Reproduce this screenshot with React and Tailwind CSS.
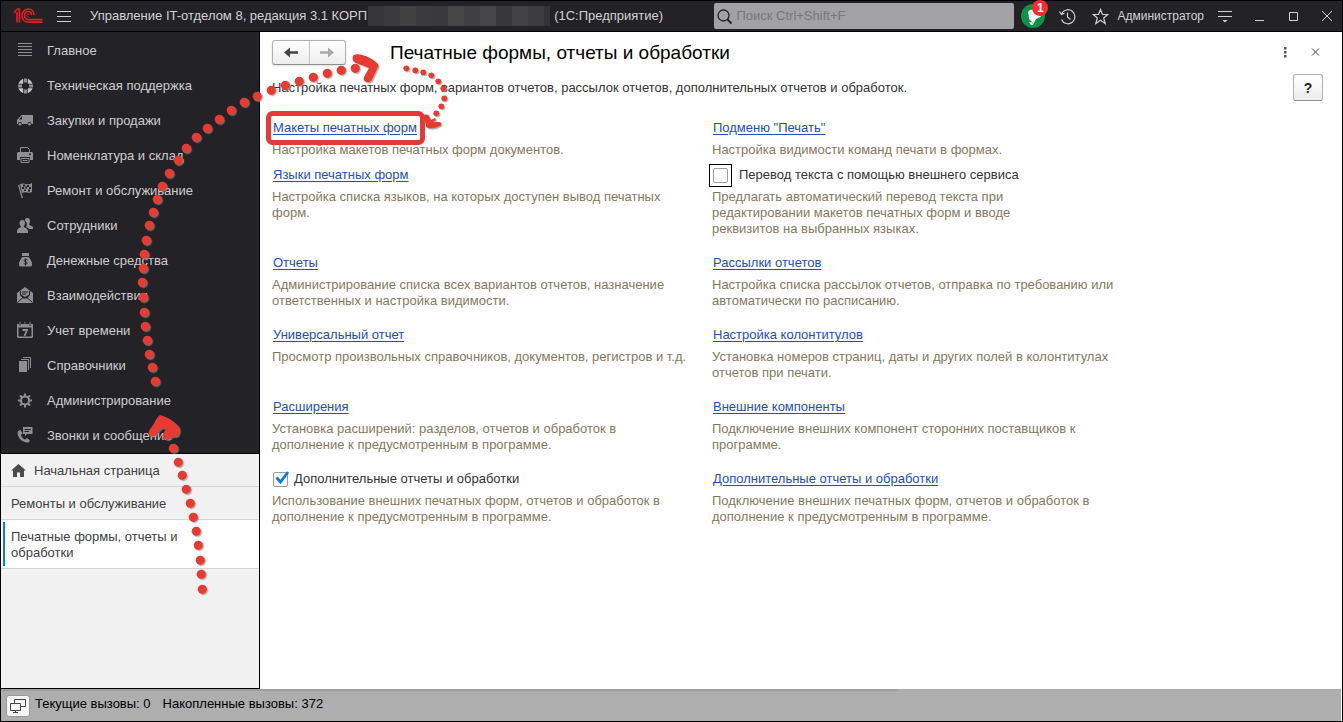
import React from "react";

const G = "#8f8f8f";
const D = "#232227";

const Icon = ({ children }) => (
  <svg width="18" height="18" viewBox="0 0 18 18" fill={G} className="shrink-0" aria-hidden="true">{children}</svg>
);

const SECTIONS = [
  ["Главное", <Icon><path d="M2 1h14v1H2zM2 4h14v1H2zM2 7h14v1H2zM2 10h14v1H2zM2 13h14v1H2z" /></Icon>],
  ["Техническая поддержка", <Icon>
    <circle cx="9.500" cy="9" r="5.200" fill="none" stroke="#c4c4c4" strokeWidth="4.400" />
    <path d="M9.500 1v6M9.500 11v6.500M1 9h6.500M11.500 9H18" stroke={D} strokeWidth="4.600" />
    <path d="M9.500 1.500v4M9.500 12.500v4M2 9h4M13 9h4" stroke={G} strokeWidth="3" /></Icon>],
  ["Закупки и продажи", <Icon>
    <path d="M1 12V8l4.500-5H17v9h-1.500a2 2 0 0 0-4 0H6a2 2 0 0 0-4 0z" /><path d="M3 7.500 5.500 4.500H6v3z" fill={D} />
    <circle cx="4" cy="12.300" r="1.300" /><circle cx="13.500" cy="12.300" r="1.300" /></Icon>],
  ["Номенклатура и склад", <Icon>
    <path d="M4.500 6V.5h7l2 2V6" fill="none" stroke={G} />
    <path fillRule="evenodd" d="M2 5h14l1 1v7h-3v-3H4v3H1V6zM13 6.500h2V8h-2z" />
    <path d="M5 11.500h8v4H5zM6.500 13.500h5" fill="none" stroke={G} /></Icon>],
  ["Ремонт и обслуживание", <Icon>
    <path d="M2 3 3.200 2.500 7 16H5.600z" /><path d="M4 2c4-2 7 2 12-1v9c-4 2-6-1-10 1z" />
    <path d="M7 2.500h2v2H7zM11 3h2v2h-2zM9 4.500h2v2H9zM13 5h2v2h-2zM6 5h2v2H6zM8 7.500h2V9H8zM12 7.500h2v2h-2z" fill={D} /></Icon>],
  ["Сотрудники", <Icon>
    <path d="M9 3.500C9 1.500 10 1 11.500 1S14 2 14 4s-.5 3-1 3.500c0 1 4 1 4 3.500v1h-4c-.5-1-2-1.500-3-2 1-1.500 1-3 .5-4.500C10 4.500 9 4.500 9 3.500z" />
    <path d="M3.500 6c0-2 1-3 2.700-3S9 4 9 6 8 9 7.700 9.500c0 1.500 4.300 1 4.300 5V16H1v-1.500c0-4 4-3.500 4-5C4.500 9 3.500 8 3.500 6z" /></Icon>],
  ["Денежные средства", <Icon>
    <path d="M6 1h7v3H6zM6.500 5h6c2 2 3.500 4.500 3.500 7.500 0 1.500-.5 2-2 2H5c-1.500 0-2-.5-2-2 0-3 1.500-5.500 3.500-7.500z" />
    <path d="M11.300 8C10 7 8 7.500 8 8.700c0 1.300 3.200.8 3.200 2.300 0 1.300-2.200 1.600-3.400.6M9.500 6.500v7" fill="none" stroke={D} /></Icon>],
  ["Взаимодействия", <Icon>
    <path d="M1 6 9 0l8 6v10H1z" /><path d="M4 4h10v4l-3 3.500H7L4 8z" fill={D} />
    <path d="M5 4h8v3.500L9 10 5 7.500z" /><path d="M6 5h6M6 7h4M1.500 15.500 7 10.500M16.500 15.500 11 10.500" stroke={D} /></Icon>],
  ["Учет времени", <Icon>
    <path fillRule="evenodd" d="M1 2h2v1.500h2V2h8v1.500h2V2h2v13l-1 1H2l-1-1zM2.500 5.500v9h13v-9z" /><path d="M3.500 0h1v3h-1zM13.500 0h1v3h-1zM8.500 0h1v1.500h-1z" />
    <path d="M6.500 8h4.500l-2.500 6" fill="none" stroke={G} strokeWidth="1.800" /></Icon>],
  ["Справочники", <Icon>
    <path d="M3 4h8v11H3z" /><path d="M5 2.500h7.500V13M7 .5h7.500V11" fill="none" stroke={G} /></Icon>],
  ["Администрирование", <Icon>
    <circle cx="9" cy="8.500" r="4" fill="none" stroke={G} strokeWidth="2" />
    <path d="M9 1.500v3M9 12.500v3M2 8.500h3M13 8.500h3M4 3.500l2 2M12 11.500l2 2M14 3.500l-2 2M6 11.500l-2 2" stroke={G} strokeWidth="2" /></Icon>],
  ["Звонки и сообщения", <Icon>
    <path d="M2 4 4.500 3 6.500 6 5 8c.5 2 2 3.500 4 4.500l2-1.500 3 2.500-1.500 2C7 16.500 0 10 2 4z" />
    <path fillRule="evenodd" d="M7 0h9.500v7H11L9 9V7H7zM8.500 2v1h6.500V2zM8.500 4v1H13V4z" /></Icon>],
];

const ITEMS = [
  { title: "Макеты печатных форм", text: "Настройка макетов печатных форм документов." },
  { title: "Подменю \"Печать\"", text: "Настройка видимости команд печати в формах." },
  { title: "Языки печатных форм", text: "Настройка списка языков, на которых доступен вывод печатных\nформ." },
  { title: "Перевод текста с помощью внешнего сервиса", check: "focus", text: "Предлагать автоматический перевод текста при\nредактировании макетов печатных форм и вводе\nреквизитов на выбранных языках." },
  { title: "Отчеты", text: "Администрирование списка всех вариантов отчетов, назначение\nответственных и настройка видимости." },
  { title: "Рассылки отчетов", text: "Настройка списка рассылок отчетов, отправка по требованию или\nавтоматически по расписанию." },
  { title: "Универсальный отчет", text: "Просмотр произвольных справочников, документов, регистров и т.д." },
  { title: "Настройка колонтитулов", text: "Установка номеров страниц, даты и других полей в колонтитулах\nотчетов при печати." },
  { title: "Расширения", text: "Установка расширений: разделов, отчетов и обработок в\nдополнение к предусмотренным в программе." },
  { title: "Внешние компоненты", text: "Подключение внешних компонент сторонних поставщиков к\nпрограмме." },
  { title: "Дополнительные отчеты и обработки", check: "on", text: "Использование внешних печатных форм, отчетов и обработок в\nдополнение к предусмотренным в программе." },
  { title: "Дополнительные отчеты и обработки", text: "Подключение внешних печатных форм, отчетов и обработок в\nдополнение к предусмотренным в программе." },
];

function Item({ title, text, check, first }) {
  return (
    <div className={first ? "pb-[9px]" : "pb-[18px]"}>
      <div className="flex h-4 items-center">
        {check ? (
          <label className={"flex items-center text-[#333] " + (check === "focus" ? "-ml-[3px] gap-[7px]" : "gap-1.5")}>
            <span className={check === "focus" ? "flex size-[23px] items-center justify-center border border-black" : "relative ml-px flex"}>
              <input type="checkbox" defaultChecked={check === "on"} className="peer size-[15px] appearance-none rounded-[2px] border border-[#a0a0a0] bg-white" />
              {check === "on" && (
                <svg width="15" height="14" viewBox="0 0 15 14" className="pointer-events-none absolute -top-px left-0.5 opacity-0 peer-checked:opacity-100" aria-hidden="true">
                  <path d="m1.500 6.500 4 4.500L13 1" fill="none" stroke="#0b7fd0" strokeWidth="2.800" />
                </svg>
              )}
            </span>
            {title}
          </label>
        ) : (
          <a href="#" className="ml-px text-[#1d50b8] underline underline-offset-2">{title}</a>
        )}
      </div>
      <p className="mt-1.5 whitespace-pre-line text-[#84795d]">{text}</p>
    </div>
  );
}

const BIG = [
  [355, 68], [341, 70], [327, 73], [313, 77], [299, 81], [285, 85], [271, 90], [257, 96], [244, 102], [231, 110], [219, 119], [207, 128], [196, 137], [186, 148], [178, 160], [169, 173], [162, 186], [157, 199], [153, 212], [149, 225], [146, 240], [144, 254], [143, 268], [142, 282], [143, 297], [144, 312], [145, 326], [147, 340], [149, 354], [152, 367], [155, 381],
  [167, 435], [173, 448], [178, 462], [182, 475], [186, 489], [190, 503], [193, 517], [196, 531], [198, 545], [200, 560], [201, 574], [202, 589],
];
const SMALL = [[406, 68], [415, 70], [423, 72], [431, 75], [438, 81], [443, 88], [444, 98], [441, 106], [436, 113]];

function Marks() {
  return (
    <svg width="480" height="620" viewBox="0 0 480 620" className="pointer-events-none absolute -left-px -top-px" aria-hidden="true">
      <defs>
        <filter id="shade" x="-5%" y="-5%" width="110%" height="110%">
          <feDropShadow dx="1.200" dy="1.200" stdDeviation="0.600" floodColor="#8a8a8a" floodOpacity="0.650" />
        </filter>
      </defs>
      <g fill="#e73a30" stroke="none" filter="url(#shade)">
        {BIG.map(([x, y]) => <circle key={x + "-" + y} cx={x + 0.3} cy={y + 0.3} r="4.600" />)}
        {SMALL.map(([x, y]) => <circle key={x + "-" + y} cx={x + 0.3} cy={y + 0.3} r="2.900" />)}
        <path d="M353 56c1-2 5-2 9-1 5 1 11 4 15 8 1 1 2 3 1 4l-6 13c-1 2-4 3-6 2s-3-3-2-5l5-9-13-5c-3-1-4-4-3-7z" />
        <path d="M158 417c1-2 3-2 5-1 6 2 12 6 16 11 1 2 1 5 0 7-1 3-4 3-7 3-2 3-6 3-8 0-1-3 0-6 2-7l-3-2c-3 1-5 4-7 7-2 2-5 2-7 0-1-2 0-4 1-6 4-4 5-9 8-12z" />
        <path d="M424 116c0-2 4-2 5 0l2 4 4-2 1 2-3 2h6c3 0 3 3 1 4-4 2-8 3-12 2-1 0-2-1-2-2z" />
      </g>
      <rect x="268.500" y="113.500" width="154" height="29" rx="4" fill="none" stroke="#e5393a" strokeWidth="5" />
    </svg>
  );
}

const MOSAIC = ["bg-[#37373b]", "bg-[#393b3c]", "bg-[#404241]", "bg-[#3a3b3e]", "bg-[#38393d]", "bg-[#464747]", "bg-[#3e4041]", "bg-[#45474a]", "bg-[#37383c]", "bg-[#424344]", "bg-[#3c3d40]", "bg-[#333438]"];

function Header() {
  return (
    <header className="flex h-[31px] items-center border-b border-black bg-[#232227] pr-[7px] text-[#d2d2d2]">
      <svg width="30" height="18" viewBox="0 0 30 18" className="ml-3 shrink-0" fill="none" stroke="#e31e24" strokeWidth="1.700" role="img" aria-label="1С">
        <path d="M1 5.500 4.500 2h2v13.500M2.500 6H4v9.500" />
        <path d="M21 8c0-3.500-2-6-5.500-6A6.600 6.600 0 0 0 9 8.500c0 4 3 6.700 7 6.700h13.500" />
        <path d="M18.500 8c0-2-1.200-3.500-3.200-3.500-2.200 0-3.700 1.800-3.700 4s1.700 4.200 4.200 4.200h13.700" />
        <path d="M16.500 7.500c-.8-1-2.700-.5-2.700 1s1 1.800 2.200 1.800" strokeWidth="1" />
      </svg>
      <button aria-label="Меню" className="ml-[13px] shrink-0">
        <svg width="16" height="16" viewBox="0 0 16 16" stroke="#d0d0d0" aria-hidden="true"><path d="M1 3.500h14M1 8.500h14M1 13.500h14" /></svg>
      </button>
      <div className="ml-[18px] shrink-0 whitespace-nowrap">Управление IT-отделом 8, редакция 3.1 КОРП</div>
      <div className="ml-px flex h-5 shrink-0">
        {MOSAIC.map((c, i) => <div key={i} className={(i === 11 ? "w-1.5 " : "w-4 ") + c} />)}
      </div>
      <div className="ml-1 shrink-0 whitespace-nowrap">(1С:Предприятие)</div>
      <div className="ml-auto flex h-[26px] w-[300px] shrink-0 items-center gap-[3px] rounded-[2px] bg-[#a2a2a4] px-0.5">
        <svg width="17" height="17" viewBox="0 0 17 17" fill="none" stroke="#232227" className="shrink-0" aria-hidden="true">
          <circle cx="7.500" cy="7.500" r="5.500" strokeWidth="1.300" /><path d="m11.500 11.500 4 4" strokeWidth="1.800" />
        </svg>
        <input aria-label="Поиск" placeholder="Поиск Ctrl+Shift+F" className="min-w-0 flex-1 bg-transparent outline-none placeholder:text-[#77777a]" />
      </div>
      <button aria-label="Уведомления" className="relative ml-[7px] size-6 shrink-0 rounded-full bg-[#0a9447]">
        <svg width="24" height="24" viewBox="0 0 24 24" fill="#fff" aria-hidden="true"><path d="M7 8.500C8 6 11 5 13 6l7 6.500-5 2.500-2.500 5C11 17 7 16 8 13zM8.500 18c0 2 1.500 3.500 4 3l-1.500-2.500z" /></svg>
        <span className="absolute -right-[3px] -top-1 flex size-4 items-center justify-center rounded-full bg-[#fb2b32] text-xs font-bold leading-4 text-white">1</span>
      </button>
      <button aria-label="История" className="ml-3.5 shrink-0">
        <svg width="17" height="17" viewBox="0 0 17 17" fill="none" stroke="#d0d0d0" strokeWidth="1.200" aria-hidden="true"><path d="M2.500 6a7 7 0 1 1 0 5.500M.5 3.500l2 3 3-1.200M8.500 4.500v4.500l3 2.500" /></svg>
      </button>
      <button aria-label="Избранное" className="ml-4 shrink-0">
        <svg width="17" height="17" viewBox="0 0 17 17" fill="none" stroke="#d0d0d0" strokeWidth="1.200" aria-hidden="true"><path d="m8.500 1.500 2 5h5.200l-4 3.500 1.500 5.500-4.700-3.200-4.700 3.200L5.300 10l-4-3.500h5.200z" /></svg>
      </button>
      <a href="#" className="ml-2 shrink-0 text-xs">Администратор</a>
      <button aria-label="Сервис" className="ml-[13px] shrink-0">
        <svg width="16" height="16" viewBox="0 0 16 16" stroke="#d0d0d0" aria-hidden="true"><path d="M1 3.500h14M1 8.500h14" /><path d="M5.500 12h5L8 14.500z" fill="#d0d0d0" stroke="none" /></svg>
      </button>
      <button aria-label="Свернуть" className="ml-[18px] shrink-0">
        <svg width="16" height="16" viewBox="0 0 16 16" stroke="#d0d0d0" aria-hidden="true"><path d="M4 12.500h9" /></svg>
      </button>
      <button aria-label="Развернуть" className="ml-[18px] shrink-0">
        <svg width="16" height="16" viewBox="0 0 16 16" stroke="#d0d0d0" fill="none" aria-hidden="true"><path d="M4.500 4.500h8v8h-8z" /></svg>
      </button>
      <button aria-label="Закрыть" className="ml-[18px] shrink-0">
        <svg width="16" height="16" viewBox="0 0 16 16" stroke="#d0d0d0" aria-hidden="true"><path d="m3 3 10 10M13 3 3 13" /></svg>
      </button>
    </header>
  );
}

function Sidebar() {
  return (
    <aside className="flex w-[259px] shrink-0 flex-col border-r border-black bg-[#f1f1f1] text-[#404040]">
      <nav className="border-b border-black bg-[#232227] pt-px text-[#cecece]">
        {SECTIONS.map(([name, icon]) => (
          <a key={name} href="#" className="flex h-[35px] items-center gap-[13px] pl-[15px]">{icon}<span>{name}</span></a>
        ))}
      </nav>
      <a href="#" className="flex h-[33px] items-center gap-2 border-b border-[#d4d4d4] pl-2.5 pt-0.5">
        <svg width="15" height="14" viewBox="0 0 15 14" fill="#4b4b4b" aria-hidden="true"><path d="M7.500 0 0 6.500h2V13h4V8.500h3V13h4V6.500h2z" /></svg>
        Начальная страница
      </a>
      <a href="#" className="flex h-[33px] items-center border-b border-[#d4d4d4] pl-2.5 pt-0.5">Ремонты и обслуживание</a>
      <a href="#" className="flex border-b border-[#d4d4d4] bg-white py-0.5 pl-0.5">
        <span className="flex border-l-2 border-[#0b7fd0] pb-[5px] pl-1.5 pr-20 pt-[7px]">Печатные формы, отчеты и обработки</span>
      </a>
    </aside>
  );
}

export default function App() {
  return (
    <div className="relative flex min-h-screen flex-col border border-black bg-white font-['Liberation_Sans',Arial,sans-serif] text-[13px] leading-4">
      <Header />
      <div className="flex flex-1">
        <Sidebar />
        <main className="flex min-w-0 flex-1 flex-col pl-3 pr-[19px] pt-2">
          <div className="flex h-[25px] items-center">
            <div className="flex h-[25px] w-[74px] shrink-0 rounded-[3px] border border-[#b0b0b0] border-b-[#8e8e8e] bg-gradient-to-b from-white to-[#ededed] shadow-sm">
              <button aria-label="Назад" className="flex flex-1 items-center justify-center border-r border-[#c4c4c4]">
                <svg width="14" height="12" viewBox="0 0 14 12" fill="#444" aria-hidden="true"><path d="M0 5.500 6 .5v3.800h8v2.400H6v3.800z" /></svg>
              </button>
              <button aria-label="Вперед" className="flex flex-1 items-center justify-center">
                <svg width="14" height="12" viewBox="0 0 14 12" fill="#a9a9a9" aria-hidden="true"><path d="M14 5.500 8 .5v3.800H0v2.400h8v3.800z" /></svg>
              </button>
            </div>
            <h1 className="ml-11 text-[19px] leading-6">Печатные формы, отчеты и обработки</h1>
            <button aria-label="Еще" className="ml-auto">
              <svg width="8" height="14" viewBox="0 0 8 14" fill="#555" aria-hidden="true"><path d="M3 1h2.500v2.500H3zM3 5h2.500v2.500H3zM3 9h2.500v2.500H3z" /></svg>
            </button>
            <button aria-label="Закрыть форму" className="ml-[22px] mr-0.5">
              <svg width="10" height="10" viewBox="0 0 10 10" stroke="#444" aria-hidden="true"><path d="m1 .5 7 7M8 .5l-7 7" /></svg>
            </button>
          </div>
          <div className="mt-[9px] flex h-[27px] items-center justify-between text-[#333]">
            <p>Настройка печатных форм, вариантов отчетов, рассылок отчетов, дополнительных отчетов и обработок.</p>
            <button aria-label="Справка" className="h-[27px] w-[30px] shrink-0 rounded-[3px] border border-[#b0b0b0] border-b-[#8e8e8e] bg-gradient-to-b from-white to-[#ededed] text-sm font-bold text-[#222]">?</button>
          </div>
          <div className="mt-[19px] grid max-w-[880px] grid-cols-2">
            {ITEMS.map((it, i) => <Item key={i} {...it} first={i < 2} />)}
          </div>
        </main>
      </div>
      <footer className="relative mr-px flex h-8 items-center bg-[#aeaeae] pl-[5px]">
        <div className="absolute left-0 top-0 h-0.5 w-[67%] bg-[#a0a0a0]" />
        <div className="absolute -top-px left-0 h-px w-[259px] bg-black" />
        <button aria-label="Окна" className="mt-0.5 flex h-[22px] w-6 items-center justify-center rounded-[3px] border border-[#989898] bg-[#f5f5f5]">
          <svg width="18" height="16" viewBox="0 0 18 16" fill="#f5f5f5" stroke="#444" aria-hidden="true"><path d="M5.500 1.500h11v7h-11z" /><path d="M1.500 5.500h10v7h-10zM6.500 12.500v2M4 14.500h5" /></svg>
        </button>
        <div className="ml-[5px] flex gap-3 pb-0.5 text-black">
          <span>Текущие вызовы: 0</span>
          <span>Накопленные вызовы: 372</span>
        </div>
      </footer>
      <Marks />
    </div>
  );
}
